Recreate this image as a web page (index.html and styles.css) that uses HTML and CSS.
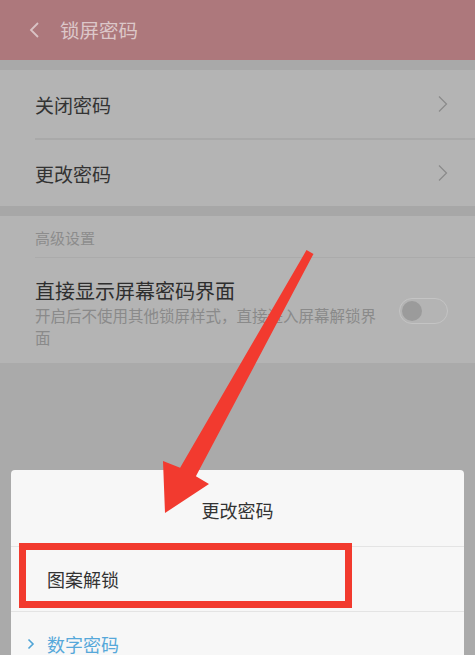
FILE: index.html
```html
<!DOCTYPE html>
<html lang="zh">
<head>
<meta charset="utf-8">
<title>锁屏密码</title>
<link rel="stylesheet" href="styles.css">
</head>
<body>
<div class="screen">
  <header class="topbar">
    <svg class="back" width="14" height="18" viewBox="0 0 14 18"><path d="M10 2 L3 9 L10 16" fill="none" stroke="#d9c3c5" stroke-width="1.8"/></svg>
    <span class="title">锁屏密码</span>
  </header>
  <div class="band"></div>
  <section class="group">
    <div class="row">
      <span class="label">关闭密码</span>
      <svg class="chev" width="10" height="18" viewBox="0 0 10 18"><path d="M1 1.5 L8.5 9 L1 16.5" fill="none" stroke="#8a8a8a" stroke-width="1.2"/></svg>
    </div>
    <div class="row">
      <span class="label">更改密码</span>
      <svg class="chev" width="10" height="18" viewBox="0 0 10 18"><path d="M1 1.5 L8.5 9 L1 16.5" fill="none" stroke="#8a8a8a" stroke-width="1.2"/></svg>
    </div>
  </section>
  <div class="band band2"></div>
  <section class="group group2">
    <div class="subhead">高级设置</div>
    <div class="switchrow">
      <div class="texts">
        <div class="big">直接显示屏幕密码界面</div>
        <div class="desc">开启后不使用其他锁屏样式，直接进入屏幕解锁界面</div>
      </div>
      <div class="toggle"><span class="knob"></span></div>
    </div>
  </section>
  <div class="dialog">
    <div class="dtitle">更改密码</div>
    <div class="ditem">图案解锁</div>
    <div class="ditem blue">
      <svg class="bchev" width="8" height="12" viewBox="0 0 8 12"><path d="M1.5 1.5 L6 6 L1.5 10.5" fill="none" stroke="#4fa4d6" stroke-width="1.6"/></svg>
      <span>数字密码</span>
    </div>
  </div>
  <div class="redbox"></div>
  <svg class="arrow" width="475" height="655" viewBox="0 0 475 655">
    <polygon fill="#f23a2f" points="313.5,253.9 306.5,250.1 180.1,467.7 163,461 165,513 209,484 195.9,476.3"/>
  </svg>
</div>
</body>
</html>
```

FILE: styles.css
```css
html, body {
  margin: 0;
  padding: 0;
}
body {
  width: 475px;
  height: 655px;
  overflow: hidden;
  background: #aaaaaa;
  font-family: "Noto Sans CJK SC", "Noto Sans", sans-serif;
}
.screen {
  position: relative;
  width: 475px;
  height: 655px;
  background: #aaaaaa;
  overflow: hidden;
}
.topbar {
  height: 60px;
  background: #ad787c;
  display: flex;
  align-items: center;
  padding-left: 28px;
  box-sizing: border-box;
}
.back {
  margin-right: 18px;
}
.title {
  color: #dcc7c9;
  font-size: 19.5px;
  line-height: 1;
}
.band {
  height: 10px;
  background: #a9a9a9;
}
.band2 {
  height: 10px;
  background: #a7a7a7;
}
.group {
  background: #b4b4b4;
  padding-left: 35px;
}
.row {
  height: 68px;
  display: flex;
  align-items: center;
  justify-content: space-between;
  padding-right: 27px;
  box-sizing: border-box;
}
.row + .row {
  border-top: 2px solid #a9a9a9;
}
.label {
  color: #333333;
  font-size: 19px;
  line-height: 1;
}
.group2 {
  height: 147px;
  box-sizing: border-box;
}
.subhead {
  height: 42px;
  display: flex;
  align-items: center;
  color: #8c8c8c;
  font-size: 15px;
  border-bottom: 1px solid #ababab;
  box-sizing: border-box;
  padding-top: 2px;
}
.switchrow {
  display: flex;
  align-items: center;
  padding-right: 27px;
  padding-top: 20px;
}
.texts {
  flex: 1;
}
.big {
  color: #2e2e2e;
  font-size: 20px;
  line-height: 26px;
}
.desc {
  color: #8a8a8a;
  font-size: 15.5px;
  line-height: 21.5px;
  width: 350px;
  margin-top: 1px;
}
.toggle {
  width: 45px;
  height: 24px;
  border: 1.5px solid #c4c4c4;
  border-radius: 14px;
  display: flex;
  align-items: center;
  padding-left: 2px;
  box-sizing: content-box;
  margin-left: 10px;
  margin-bottom: 4px;
}
.knob {
  width: 20px;
  height: 20px;
  border-radius: 50%;
  background: #9b9b9b;
}
.dialog {
  position: absolute;
  left: 11px;
  top: 470px;
  width: 453px;
  height: 200px;
  background: #f7f7f7;
  border-radius: 4px;
}
.dtitle {
  height: 77px;
  display: flex;
  align-items: center;
  justify-content: center;
  color: #333333;
  font-size: 18px;
  border-bottom: 1px solid #e4e4e4;
  box-sizing: border-box;
  padding-top: 4px;
}
.ditem {
  height: 65px;
  display: flex;
  align-items: center;
  padding-left: 36px;
  color: #333333;
  font-size: 18px;
  border-bottom: 1px solid #e4e4e4;
  box-sizing: border-box;
}
.ditem.blue {
  color: #56a8da;
  padding-left: 16px;
  border-bottom: none;
  align-items: flex-start;
  padding-top: 19px;
}
.bchev {
  margin-right: 12px;
  margin-top: 7px;
}
.redbox {
  position: absolute;
  left: 19px;
  top: 543px;
  width: 333px;
  height: 65px;
  border: 7px solid #f23a2e;
  box-sizing: border-box;
}
.arrow {
  position: absolute;
  left: 0;
  top: 0;
  pointer-events: none;
}
```
